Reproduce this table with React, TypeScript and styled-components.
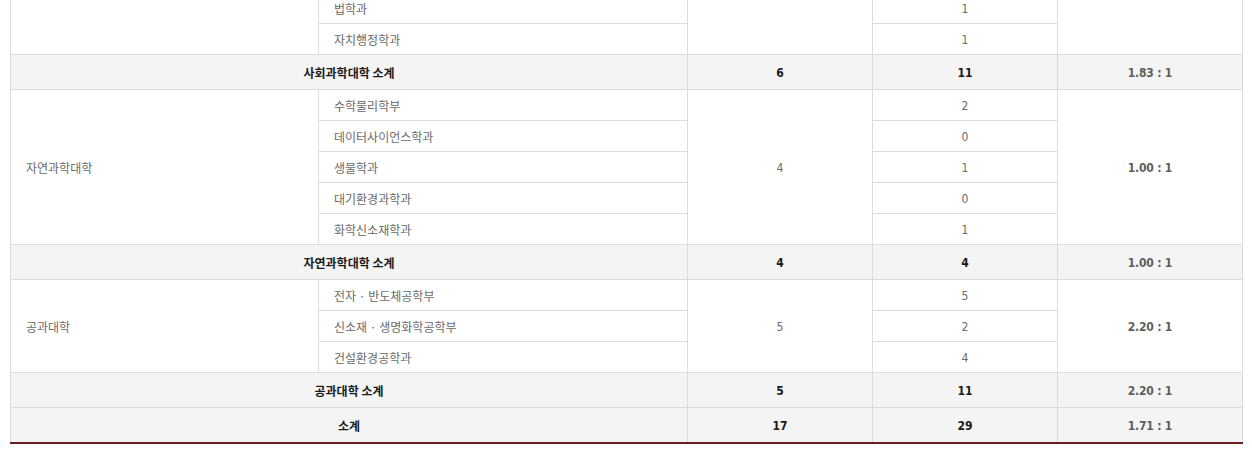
import { FC } from 'react';
import styled, { createGlobalStyle } from 'styled-components';

const GlobalStyle = createGlobalStyle`
	html, body {
		margin: 0;
		padding: 0;
		background: #fff;
		overflow: hidden;
	}
	body {
		font-family: 'Noto Sans CJK KR', 'Noto Sans', sans-serif;
	}
`;

const Page = styled.div`
	padding: 0 10px;
	margin-top: -8px;
`;

const Table = styled.table`
	width: 1232px;
	border-collapse: collapse;
	table-layout: fixed;
	border-bottom: 2px solid #6d1c20;
`;

interface CellProps {
	align?: 'left' | 'center';
	num?: boolean;
	strong?: boolean;
	ratio?: boolean;
}

const Cell = styled.td<CellProps>`
	border: 1px solid #dcdcdc;
	padding: 8px 15px 6px;
	height: 16px;
	line-height: 16px;
	font-size: 12px;
	color: #6a6a6a;
	text-align: ${(p) => p.align || 'center'};
	font-family: ${(p) =>
		p.num || p.ratio
			? "'DejaVu Sans Condensed', 'DejaVu Sans', sans-serif"
			: "'Noto Sans CJK KR', 'Noto Sans', sans-serif"};
	font-weight: ${(p) => (p.strong || p.ratio ? 700 : 400)};
	${(p) => p.ratio && 'color: #5e5e5e; letter-spacing: -0.2px;'}
	${(p) => p.strong && 'color: #1a1a1a;'}
`;

const SubRow = styled.tr`
	background: #f4f4f4;

	td {
		padding-top: 10px;
		padding-bottom: 8px;
	}
`;

interface Dept {
	name: string;
	count: number;
}

interface College {
	name: string;
	quota?: number;
	ratio?: string;
	depts: Dept[];
	sub: { label: string; quota: number; applied: number; ratio: string };
}

const colleges: College[] = [
	{
		name: '',
		depts: [
			{ name: '법학과', count: 1 },
			{ name: '자치행정학과', count: 1 },
		],
		sub: { label: '사회과학대학 소계', quota: 6, applied: 11, ratio: '1.83 : 1' },
	},
	{
		name: '자연과학대학',
		quota: 4,
		ratio: '1.00 : 1',
		depts: [
			{ name: '수학물리학부', count: 2 },
			{ name: '데이터사이언스학과', count: 0 },
			{ name: '생물학과', count: 1 },
			{ name: '대기환경과학과', count: 0 },
			{ name: '화학신소재학과', count: 1 },
		],
		sub: { label: '자연과학대학 소계', quota: 4, applied: 4, ratio: '1.00 : 1' },
	},
	{
		name: '공과대학',
		quota: 5,
		ratio: '2.20 : 1',
		depts: [
			{ name: '전자 · 반도체공학부', count: 5 },
			{ name: '신소재 · 생명화학공학부', count: 2 },
			{ name: '건설환경공학과', count: 4 },
		],
		sub: { label: '공과대학 소계', quota: 5, applied: 11, ratio: '2.20 : 1' },
	},
];

const SumRow: FC<{ label: string; quota: number; applied: number; ratio: string }> = ({
	label,
	quota,
	applied,
	ratio,
}) => (
	<SubRow>
		<Cell colSpan={2} strong>
			{label}
		</Cell>
		<Cell num strong>
			{quota}
		</Cell>
		<Cell num strong>
			{applied}
		</Cell>
		<Cell ratio>{ratio}</Cell>
	</SubRow>
);

const CollegeRows: FC<{ college: College }> = ({ college }) => {
	const span = college.depts.length;

	return (
		<>
			{college.depts.map((dept, i) => (
				<tr key={dept.name}>
					{i === 0 && (
						<Cell rowSpan={span} align="left">
							{college.name}
						</Cell>
					)}
					<Cell align="left">{dept.name}</Cell>
					{i === 0 && (
						<Cell rowSpan={span} num>
							{college.quota}
						</Cell>
					)}
					<Cell num>{dept.count}</Cell>
					{i === 0 && (
						<Cell rowSpan={span} ratio>
							{college.ratio}
						</Cell>
					)}
				</tr>
			))}
			<SumRow {...college.sub} />
		</>
	);
};

const App: FC = () => {
	return (
		<Page>
			<GlobalStyle />
			<Table>
				<colgroup>
					<col style={{ width: 308 }} />
					<col style={{ width: 369 }} />
					<col style={{ width: 185 }} />
					<col style={{ width: 185 }} />
					<col style={{ width: 185 }} />
				</colgroup>
				<tbody>
					{colleges.map((c) => (
						<CollegeRows key={c.sub.label} college={c} />
					))}
					<SumRow label="소계" quota={17} applied={29} ratio="1.71 : 1" />
				</tbody>
			</Table>
		</Page>
	);
};

export default App;
